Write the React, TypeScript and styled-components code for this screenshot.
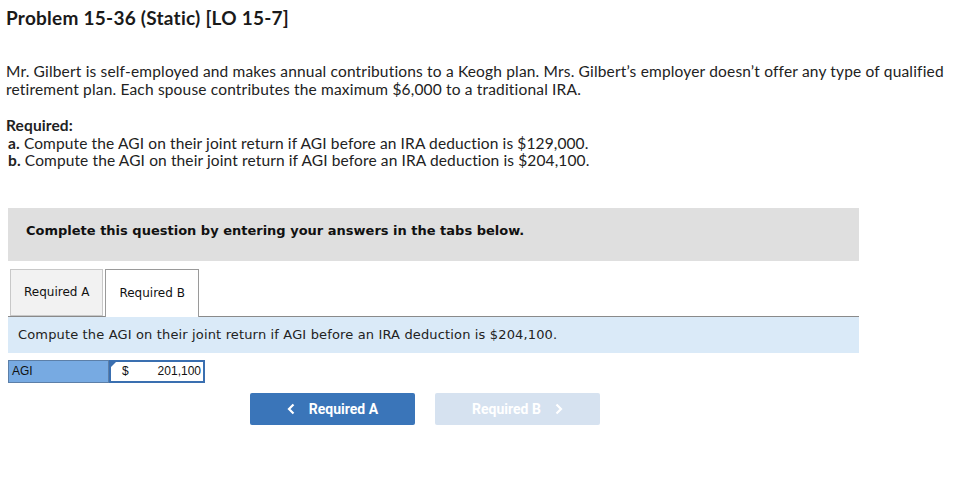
import React from "react";
import styled, { createGlobalStyle } from "styled-components";

const Global = createGlobalStyle`
  html, body { margin: 0; padding: 0; background: #fff; }
  body { font-family: "Lato", "Liberation Sans", sans-serif; color: #222; }
`;

const Page = styled.div`
  width: 969px;
  padding: 7px 0 0 6px;
  box-sizing: border-box;
`;

const Title = styled.h1`
  margin: 0;
  font-family: "Lato", sans-serif;
  font-weight: 700;
  font-size: 19px;
  letter-spacing: 0.25px;
  line-height: 22px;
  color: #1a1a1a;
`;

const Para = styled.p`
  margin: 33px 0 0 0;
  font-size: 15.5px;
  letter-spacing: 0.17px;
  line-height: 18px;
  color: #222;
`;

const ReqBlock = styled.div`
  margin-top: 19px;
  font-size: 15.5px;
  letter-spacing: 0.12px;
  line-height: 17.5px;
`;

const Bold = styled.b`
  font-weight: 700;
`;

const Item = styled.div`
  padding-left: 2px;
`;

const Panel = styled.div`
  margin: 38px 0 0 2px;
  width: 851px;
`;

const Notice = styled.div`
  height: 53px;
  box-sizing: border-box;
  background: #dfdfdf;
  padding: 15px 0 0 18px;
  line-height: 16px;
  font-family: "DejaVu Sans", Verdana, sans-serif;
  font-weight: 700;
  font-size: 13px;
  color: #111;
`;

const Tabs = styled.div`
  margin-top: 8px;
  display: flex;
  gap: 2px;
  padding-left: 2px;
  border-bottom: 1px solid #8a8a8a;
  height: 47px;
`;

const Tab = styled.div<{ $active?: boolean }>`
  box-sizing: border-box;
  height: ${(p) => (p.$active ? "48px" : "47px")};
  padding: 0 13px;
  display: flex;
  align-items: center;
  border: 1px solid ${(p) => (p.$active ? "#9a9a9a" : "#c8c8c8")};
  border-bottom: ${(p) => (p.$active ? "none" : "1px solid #c8c8c8")};
  background: ${(p) => (p.$active ? "#fff" : "#f2f2f2")};
  font-family: "DejaVu Sans", Verdana, sans-serif;
  font-size: 12px;
  color: #111;
  z-index: 1;
`;

const Instruction = styled.div`
  height: 36px;
  background: #daeaf8;
  display: flex;
  align-items: center;
  padding-left: 10px;
  font-family: "DejaVu Sans", Verdana, sans-serif;
  font-size: 13px;
  letter-spacing: 0.15px;
  color: #222;
`;

const Row = styled.div`
  margin-top: 7px;
  display: flex;
  height: 23px;
  width: 197px;
  border: 1px solid #5c7fa8;
  box-sizing: border-box;
`;

const Label = styled.div`
  box-sizing: border-box;
  width: 100px;
  background: #77aae2;
  display: flex;
  align-items: center;
  padding-left: 3px;
  font-family: "Liberation Sans", Arial, sans-serif;
  font-size: 12px;
  color: #111;
  border-right: 1px solid #5c7fa8;
`;

const InputCell = styled.div`
  position: relative;
  flex: 1;
  background: #fff;
  border: 2px solid #3a6fb0;
  margin: -1px -1px -1px 0;
  display: flex;
  align-items: center;
  justify-content: space-between;
  padding: 0 2px 0 11px;
  font-family: "Liberation Sans", Arial, sans-serif;
  font-size: 12px;
  color: #111;
`;

const Marker = styled.span`
  position: absolute;
  left: 0;
  top: 0;
  width: 0;
  height: 0;
  border-top: 5px solid #3a6fb0;
  border-right: 5px solid transparent;
`;

const Nav = styled.div`
  margin: 10px 0 0 242px;
  display: flex;
  gap: 20px;
`;

const NavButton = styled.button<{ $disabled?: boolean }>`
  width: 165px;
  height: 32px;
  border: none;
  border-radius: 2px;
  background: ${(p) => (p.$disabled ? "#d6e2f0" : "#3a75b9")};
  color: #fff;
  font-family: "Roboto", "Liberation Sans", sans-serif;
  font-weight: 700;
  font-size: 14px;
  display: flex;
  align-items: center;
  justify-content: center;
  gap: 14px;
  padding: 0;
  cursor: pointer;
`;

const Chevron = ({ dir }: { dir: "left" | "right" }) => (
  <svg width="8" height="12" viewBox="0 0 8 12">
    <path
      d={dir === "left" ? "M6.5 1.5 L2 6 L6.5 10.5" : "M1.5 1.5 L6 6 L1.5 10.5"}
      fill="none"
      stroke="#fff"
      strokeWidth="2.2"
    />
  </svg>
);

export default function App() {
  return (
    <>
      <Global />
      <Page>
        <Title>Problem 15-36 (Static) [LO 15-7]</Title>
        <Para>
          Mr. Gilbert is self-employed and makes annual contributions to a Keogh plan. Mrs. Gilbert’s employer
          doesn’t offer any type of qualified retirement plan. Each spouse contributes the maximum $6,000 to a
          traditional IRA.
        </Para>
        <ReqBlock>
          <Bold>Required:</Bold>
          <Item>
            <Bold>a.</Bold> Compute the AGI on their joint return if AGI before an IRA deduction is $129,000.
          </Item>
          <Item>
            <Bold>b.</Bold> Compute the AGI on their joint return if AGI before an IRA deduction is $204,100.
          </Item>
        </ReqBlock>
        <Panel>
          <Notice>Complete this question by entering your answers in the tabs below.</Notice>
          <Tabs>
            <Tab>Required A</Tab>
            <Tab $active>Required B</Tab>
          </Tabs>
          <Instruction>Compute the AGI on their joint return if AGI before an IRA deduction is $204,100.</Instruction>
          <Row>
            <Label>AGI</Label>
            <InputCell>
              <Marker />
              <span>$</span>
              <span>201,100</span>
            </InputCell>
          </Row>
          <Nav>
            <NavButton>
              <Chevron dir="left" />
              <span>Required A</span>
            </NavButton>
            <NavButton $disabled>
              <span>Required B</span>
              <Chevron dir="right" />
            </NavButton>
          </Nav>
        </Panel>
      </Page>
    </>
  );
}
